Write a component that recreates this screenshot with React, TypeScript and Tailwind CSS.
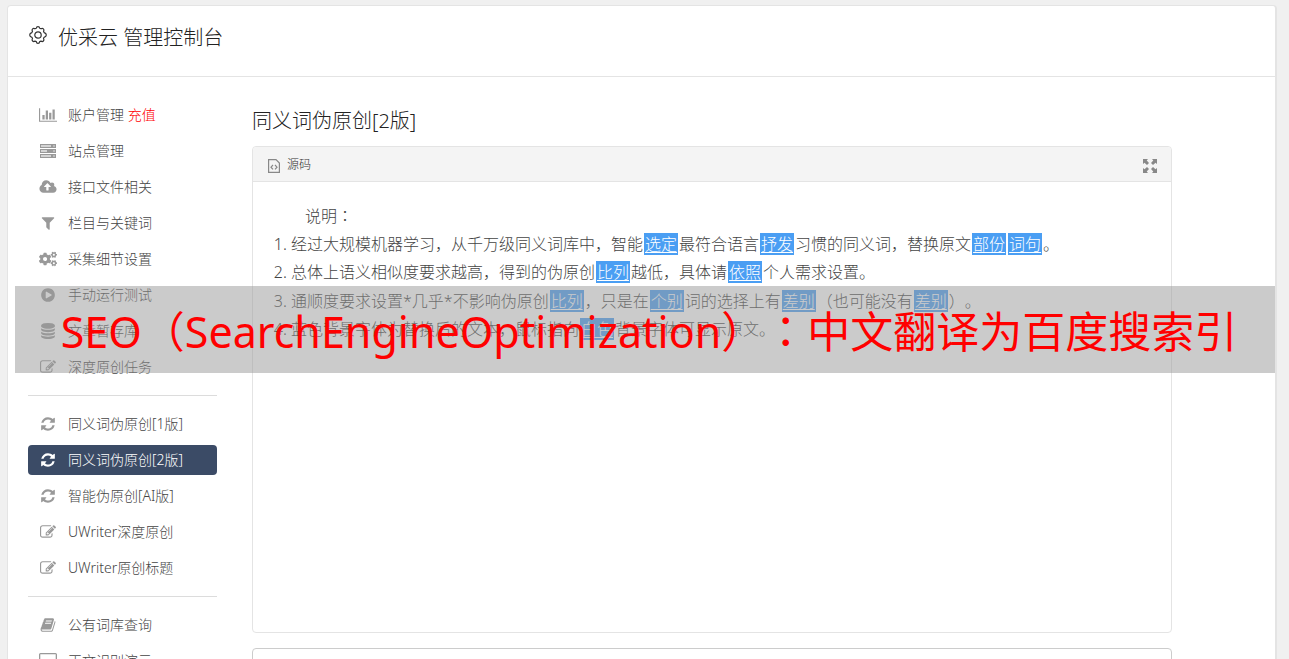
import { ReactNode } from 'react'
import { FaCogs } from 'react-icons/fa'

type IconProps = { className?: string }

const makeIcon = (viewBox: string, d: string) =>
    function Icon({ className }: IconProps) {
        return (
            <svg viewBox={viewBox} fill="currentColor" aria-hidden="true" className={className}>
                <path fillRule="evenodd" d={d} />
            </svg>
        )
    }

const ChartIcon = makeIcon(
    '0 0 2048 1792',
    'M640 896v512h-256v-512h256zm384-512v1024h-256v-1024h256zm1024 1152v128h-2048v-1536h128v1408h1920zm-640-896v768h-256v-768h256zm384-384v1152h-256v-1152h256z',
)
const CloudUploadIcon = makeIcon(
    '0 0 1920 1792',
    'M1280 864q0-14-9-23l-352-352q-9-9-23-9t-23 9l-351 351q-10 12-10 24 0 14 9 23t23 9h224v352q0 13 9.5 22.5t22.5 9.5h192q13 0 22.5-9.5t9.5-22.5v-352h224q13 0 22.5-9.5t9.5-22.5zm640 288q0 159-112.5 271.5t-271.5 112.5h-1088q-185 0-316.5-131.5t-131.5-316.5q0-130 70-240t188-165q-2-30-2-43 0-212 150-362t362-150q156 0 285.5 87t188.5 231q71-62 166-62 106 0 181 75t75 181q0 76-41 138 130 31 213.5 135.5t83.5 238.5z',
)
const FilterIcon = makeIcon(
    '0 0 1792 1792',
    'M1595 295q17 41-14 70l-493 493v742q0 42-39 59-13 5-25 5-27 0-45-19l-256-256q-19-19-19-45v-486l-493-493q-31-29-14-70 17-39 59-39h1280q42 0 59 39z',
)
const PlayIcon = makeIcon(
    '0 0 1792 1792',
    'M896 128q209 0 385.5 103t279.5 279.5 103 385.5-103 385.5-279.5 279.5-385.5 103-385.5-103-279.5-279.5-103-385.5 103-385.5 279.5-279.5 385.5-103zm384 823q32-18 32-55t-32-55l-544-320q-31-19-64-1-32 19-32 56v640q0 37 32 56 16 8 32 8 17 0 32-9z',
)
const DatabaseIcon = makeIcon(
    '0 0 1792 1792',
    'M896 768q237 0 443-43t325-127v170q0 69-103 128t-280 93.5-385 34.5-385-34.5-280-93.5-103-128v-170q119 84 325 127t443 43zm0 768q237 0 443-43t325-127v170q0 69-103 128t-280 93.5-385 34.5-385-34.5-280-93.5-103-128v-170q119 84 325 127t443 43zm0-384q237 0 443-43t325-127v170q0 69-103 128t-280 93.5-385 34.5-385-34.5-280-93.5-103-128v-170q119 84 325 127t443 43zm0-1152q208 0 385 34.5t280 93.5 103 128v128q0 69-103 128t-280 93.5-385 34.5-385-34.5-280-93.5-103-128v-128q0-69 103-128t280-93.5 385-34.5z',
)
const EditIcon = makeIcon(
    '0 0 1792 1792',
    'M888 1184l116-116-152-152-116 116v56h96v96h56zm440-720q-16-16-33 1l-350 350q-17 17-1 33t33-1l350-350q17-17 1-33zm80 594v190q0 119-84.5 203.5t-203.5 84.5h-832q-119 0-203.5-84.5t-84.5-203.5v-832q0-119 84.5-203.5t203.5-84.5h832q63 0 117 25 15 7 18 23 3 17-9 29l-49 49q-14 14-32 8-23-6-45-6h-832q-66 0-113 47t-47 113v832q0 66 47 113t113 47h832q66 0 113-47t47-113v-126q0-13 9-22l64-64q15-15 35-7t20 29zm-96-738l288 288-672 672h-288v-288zm444 132l-92 92-288-288 92-92q28-28 68-28t68 28l152 152q28 28 28 68t-28 68z',
)
const RefreshIcon = makeIcon(
    '0 0 1792 1792',
    'M1639 1056q0 5-1 7-64 268-268 434.5t-478 166.5q-146 0-282.5-55t-243.5-157l-129 129q-19 19-45 19t-45-19-19-45v-448q0-26 19-45t45-19h448q26 0 45 19t19 45-19 45l-137 137q71 66 161 102t187 36q134 0 250-65t186-179q11-17 53-117 8-23 30-23h192q13 0 22.5 9.5t9.5 22.5zm25-800v448q0 26-19 45t-45 19h-448q-26 0-45-19t-19-45 19-45l138-138q-148-137-349-137-134 0-250 65t-186 179q-11 17-53 117-8 23-30 23h-199q-13 0-22.5-9.5t-9.5-22.5v-7q65-268 270-434.5t480-166.5q146 0 284 55.5t245 156.5l130-129q19-19 45-19t45 19 19 45z',
)
const BookIcon = makeIcon(
    '0 0 1792 1792',
    'M1703 478q40 57 18 129l-275 906q-19 64-76.5 107.5t-122.5 43.5h-923q-77 0-148.5-53.5t-99.5-131.5q-24-67-2-127 0-4 3-27t4-37q1-8-3-21.5t-3-19.5q2-11 8-21t16.5-23.5 16.5-23.5q23-38 45-91.5t30-91.5q3-10 .5-30t-.5-28q3-11 17-28t17-23q21-36 42-92t25-90q1-9-2.5-32t.5-28q4-13 22-30.5t22-22.5q19-26 42.5-84.5t27.5-96.5q1-8-3-25.5t-2-26.5q2-8 9-18t18-23 17-21q8-12 16.5-30.5t15-35 16-36 19.5-32 26.5-23.5 36-11.5 47.5 5.5l-1 3q38-9 51-9h761q74 0 114 56t18 130l-274 906q-36 119-71.5 153.5t-128.5 34.5h-869q-27 0-38 15-11 16-1 43 24 70 144 70h923q29 0 56-15.5t35-41.5l300-987q7-22 5-57 38 15 59 43zm-1064 2q-4 13 2 22.5t20 9.5h608q13 0 25.5-9.5t16.5-22.5l21-64q4-13-2-22.5t-20-9.5h-608q-13 0-25.5 9.5t-16.5 22.5zm-83 256q-4 13 2 22.5t20 9.5h608q13 0 25.5-9.5t16.5-22.5l21-64q4-13-2-22.5t-20-9.5h-608q-13 0-25.5 9.5t-16.5 22.5z',
)
const DesktopIcon = makeIcon(
    '0 0 18 16',
    'M1.5 0h15Q18 0 18 1.5v9Q18 12 16.5 12h-5l1 3v1h-7v-1l1-3h-5Q0 12 0 10.5v-9Q0 0 1.5 0zM1.3 1.3v8h15.4v-8z',
)
const ExpandIcon = makeIcon(
    '0 0 14 14',
    'M0 0h5L3.7 1.5 6 4 4 6 1.5 3.7 0 5zM14 0v5l-1.5-1.3L10 6 8 4l2.3-2.5L9 0zM0 14V9l1.5 1.3L4 8l2 2-2.3 2.5L5 14zM14 14H9l1.3-1.5L8 10l2-2 2.5 2.3L14 9z',
)

function ServerIcon({ className }: IconProps) {
    return (
        <svg viewBox="0 0 18 16" aria-hidden="true" className={className}>
            <path fill="currentColor" d="M1 1h16v4H1zM1 6h16v4H1zM1 11h16v4H1z" />
            <path fill="#d4d4d4" d="M2 2h10v2H2zM2 7h6v2H2zM2 12h10v2H2z" />
            <path fill="#ddd" d="M14 2.5h2v1h-2zM14 7.5h2v1h-2zM14 12.5h2v1h-2z" />
        </svg>
    )
}

function GearIcon({ className }: IconProps) {
    return (
        <svg viewBox="0 0 18 18" fill="none" stroke="currentColor" strokeWidth="1.2" aria-hidden="true" className={className}>
            <path
                d="M7.3 2.3Q7.5.7 9 .7t1.7 1.6l1.3.5q1.300-1 2.400.1t.1 2.400l.6 1.300Q17.300 7.200 17.300 9t-2.200 2.300l-.6 1.200q1 1.400-.1 2.500t-2.400.1l-1.300.5Q10.500 17.300 9 17.300t-1.700-1.700L6 15.100q-1.300 1-2.400-.1t-.1-2.500l-.6-1.200Q.7 10.800.7 9t2.200-2.400l.6-1.300q-1-1.300.1-2.400t2.400-.1z"
                strokeLinejoin="round"
            />
            <circle cx="9" cy="9" r="3.2" />
        </svg>
    )
}

function SourceIcon({ className }: IconProps) {
    return (
        <svg viewBox="0 0 12 14" fill="none" stroke="currentColor" strokeWidth="1.2" aria-hidden="true" className={className}>
            <path d="M.6.6H8l3.4 3.4v9.4H.6zM5 6 3 8.2l2 2.2M7 6l2 2.2-2 2.2" />
        </svg>
    )
}

const navigation = [
    [
        { name: '账户管理', icon: ChartIcon, extra: '充值' },
        { name: '站点管理', icon: ServerIcon },
        { name: '接口文件相关', icon: CloudUploadIcon },
        { name: '栏目与关键词', icon: FilterIcon },
        { name: '采集细节设置', icon: FaCogs },
        { name: '手动运行测试', icon: PlayIcon },
        { name: '文章暂存库', icon: DatabaseIcon },
        { name: '深度原创任务', icon: EditIcon },
    ],
    [
        { name: '同义词伪原创[1版]', icon: RefreshIcon },
        { name: '同义词伪原创[2版]', icon: RefreshIcon, current: true },
        { name: '智能伪原创[AI版]', icon: RefreshIcon },
        { name: 'UWriter深度原创', icon: EditIcon },
        { name: 'UWriter原创标题', icon: EditIcon },
    ],
    [
        { name: '公有词库查询', icon: BookIcon },
        { name: '正文识别演示', icon: DesktopIcon },
    ],
] as { name: string; icon: (props: IconProps) => ReactNode; extra?: string; current?: boolean }[][]

function classNames(...classes: (string | boolean | undefined)[]) {
    return classes.filter(Boolean).join(' ')
}

function Mark({ children }: { children: ReactNode }) {
    return <span className="mx-px bg-[#4a9ef3] px-px text-white underline underline-offset-2">{children}</span>
}

// Full-width punctuation centred in its cell
function Punct({ children }: { children: ReactNode }) {
    return <span className="font-['Noto_Sans_CJK_TC',sans-serif]">{children}</span>
}

function Sidebar() {
    return (
        <nav className="w-[189px] shrink-0 pt-[23px]">
            {navigation.map((group, i) => (
                <ul
                    key={i}
                    className={classNames('flex flex-col gap-1.5', i > 0 && 'mt-[13px] border-t border-[#dcdcdc] pt-[13px]')}
                >
                    {group.map((item) => (
                        <li key={item.name}>
                            <a
                                href="#"
                                aria-current={item.current ? 'page' : undefined}
                                className={classNames(
                                    'flex h-[30px] items-center gap-2.5 rounded px-2.5 text-sm whitespace-nowrap',
                                    item.current ? 'bg-[#3b4b66] text-white' : 'text-[#444]',
                                )}
                            >
                                <span className={classNames('flex w-5 shrink-0 justify-center', !item.current && 'text-[#999]')}>
                                    <item.icon className="h-4 w-[18px]" />
                                </span>
                                <span>
                                    {item.name}
                                    {item.extra && <span className="text-[#f00]"> {item.extra}</span>}
                                </span>
                            </a>
                        </li>
                    ))}
                </ul>
            ))}
        </nav>
    )
}

export default function App() {
    return (
        <div className="relative h-screen overflow-hidden bg-[#f0f0f0] pt-[5px] pr-3 pl-[7px] font-['Noto_Sans','Noto_Sans_CJK_SC',sans-serif] font-light [text-spacing-trim:space-all]">
            <div className="min-h-screen rounded-t border border-r-2 border-[#e4e4e4] bg-white">
                <header className="flex h-[71px] items-start gap-2.5 border-b border-[#e4e4e4] px-5 pt-4">
                    <GearIcon className="mt-1 h-[18px] w-5 text-[#333]" />
                    <h1 className="text-xl leading-8 text-[#222]">优采云 管理控制台</h1>
                </header>

                <div className="flex gap-[35px] pr-[103px] pl-5">
                    <Sidebar />

                    <main className="min-w-0 flex-1 pt-7">
                        <h2 className="text-xl leading-8 text-[#222]">同义词伪原创[2版]</h2>

                        <section className="mt-[9px] min-h-[487px] rounded border border-[#e4e4e4]">
                            <div className="flex h-[35px] items-center justify-between rounded-t border-b border-[#e4e4e4] bg-[#f4f4f4] pr-3.5 pl-[15px]">
                                <div className="flex items-center gap-[7px] pt-0.5 text-xs text-[#333]">
                                    <SourceIcon className="mt-0.5 h-3.5 w-3 text-[#888]" />
                                    源码
                                </div>
                                <button type="button" aria-label="全屏" className="mt-1 text-[#888]">
                                    <ExpandIcon className="size-3.5" />
                                </button>
                            </div>
                            <div className="px-5 pt-[19px] text-base leading-7 text-[#444]">
                                <p className="indent-8">
                                    说明<Punct>：</Punct>
                                </p>
                                <ol className="ml-[18px] list-decimal whitespace-nowrap">
                                    <li>
                                        经过大规模机器学习，从千万级同义词库中，智能<Mark>选定</Mark>最符合语言<Mark>抒发</Mark>习惯的同义词，替换原文<Mark>部份</Mark><Mark>词句</Mark>。
                                    </li>
                                    <li>
                                        总体上语义相似度要求越高，得到的伪原创<Mark>比列</Mark>越低，具体请<Mark>依照</Mark>个人需求设置。
                                    </li>
                                    <li>
                                        通顺度要求设置*几乎*不影响伪原创<Mark>比列</Mark>，只是在<Mark>个别</Mark>词的选择上有<Mark>差别</Mark>
                                        <Punct>（</Punct>也可能没有<Mark>差别</Mark>
                                        <Punct>）</Punct>。
                                    </li>
                                    <li>
                                        蓝色背景字体为替换后的文本，鼠标指向<Mark>白色</Mark>背景字体可显示原文。
                                    </li>
                                </ol>
                            </div>
                        </section>

                        <textarea aria-label="原文" className="mt-[15px] block h-40 w-full resize-none rounded border border-[#ccc]" />
                    </main>
                </div>
            </div>

            {/* Banner laid over the page */}
            <div className="absolute top-[286px] right-3.5 left-[15px] flex h-[87px] items-center justify-center bg-[#979797]/50 pt-1 pl-2">
                <p className="font-['Noto_Sans','Noto_Sans_CJK_TC',sans-serif] text-[43px] leading-none font-normal whitespace-nowrap text-[#f00]">
                    SEO（SearchEngineOptimization）：中文翻译为百度搜索引
                </p>
            </div>
        </div>
    )
}
